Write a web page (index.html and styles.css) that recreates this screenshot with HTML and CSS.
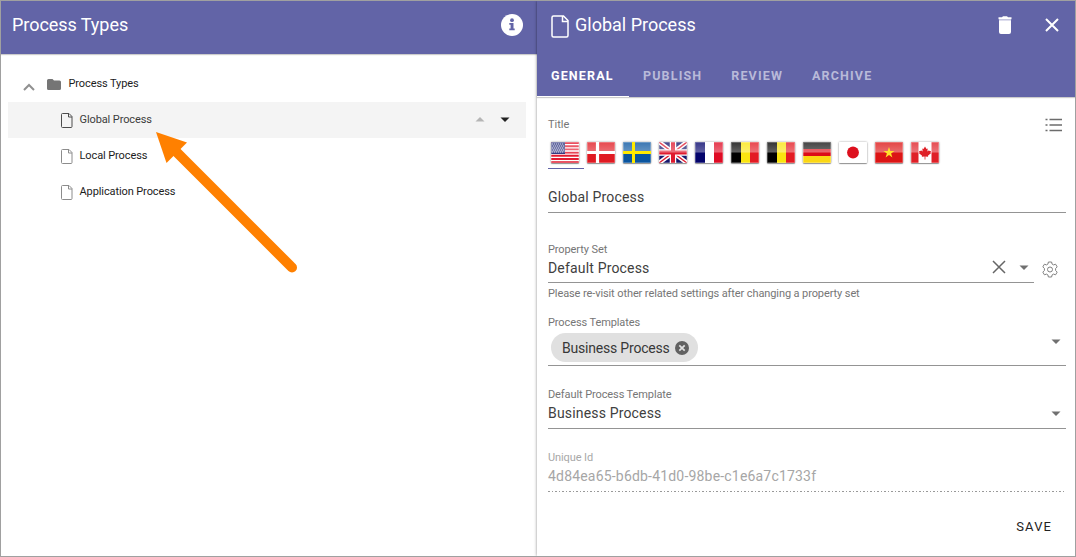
FILE: index.html
```html
<!DOCTYPE html>
<html lang="en">
<head>
<meta charset="utf-8">
<title>Process Types</title>
<link rel="stylesheet" href="styles.css">
</head>
<body>
<svg class="defs" width="0" height="0" aria-hidden="true">
  <defs>
    <linearGradient id="gloss" x1="0" y1="0" x2="0" y2="1"><stop offset="0" stop-color="#fff" stop-opacity=".2"/><stop offset="1" stop-color="#fff" stop-opacity=".38"/></linearGradient>
    <symbol id="doc" viewBox="0 0 12 15"><path d="M1.500.5h6.500l3 3v10a1 1 0 0 1-1 1h-8.500a1 1 0 0 1-1-1v-12a1 1 0 0 1 1-1zM7.500.5v3.500h3.500" fill="none" stroke="currentColor"/></symbol>
    <symbol id="down" viewBox="0 0 10 5"><path d="M.5.5h9L5 5z" fill="currentColor"/></symbol>
    <symbol id="shine" viewBox="0 0 28 21"><path d="M0 0h28v10.500H0z" fill="url(#gloss)"/><path d="M.5.5h27v20H.5z" fill="none" stroke="#fff" stroke-opacity=".25"/></symbol>
    <symbol id="belgium" viewBox="0 0 28 21"><path d="M0 0h10v21H0z" fill="#000"/><path d="M10 0h9v21h-9z" fill="#fae510"/><path d="M19 0h9v21h-9z" fill="#e31b23"/></symbol>
  </defs>
</svg>
<div class="frame">
  <section class="tree-panel">
    <header class="tree-header">
      <h1 class="heading list-heading">Process Types</h1>
      <svg class="info" width="22" height="22" viewBox="0 0 22 22"><circle cx="11" cy="11" r="11" fill="#fff"/><circle cx="11" cy="6.200" r="1.900" fill="#6264a7"/><path d="M8.300 9h4.200v5.500h1.200v1.800H8.300v-1.800h1.300v-3.700H8.300z" fill="#6264a7"/></svg>
    </header>
    <div class="tree">
      <div class="row root-row">
        <svg class="chevron" width="12" height="8" viewBox="0 0 12 8"><path d="M1 7l5-5 5 5" fill="none" stroke="#909090" stroke-width="2"/></svg>
        <svg class="folder" width="14" height="11" viewBox="0 0 14 11"><path d="M1.500 0h4L7 1.500h5.500A1.500 1.500 0 0 1 14 3v6.500a1.500 1.500 0 0 1-1.500 1.500h-11A1.500 1.500 0 0 1 0 9.500v-8A1.500 1.500 0 0 1 1.500 0z" fill="#757575"/></svg>
        <span class="node-text">Process Types</span>
      </div>
      <div class="row child selected">
        <svg class="doc-icon" width="12" height="15"><use href="#doc"/></svg>
        <span class="node-text">Global Process</span>
        <span class="movers">
          <svg class="up" width="10" height="5"><use href="#down"/></svg>
          <svg class="down" width="10" height="5"><use href="#down"/></svg>
        </span>
      </div>
      <div class="row child"><svg class="doc-icon" width="12" height="15"><use href="#doc"/></svg><span class="node-text">Local Process</span></div>
      <div class="row child"><svg class="doc-icon" width="12" height="15"><use href="#doc"/></svg><span class="node-text">Application Process</span></div>
    </div>
  </section>

  <section class="detail-panel">
    <header class="detail-header">
      <div class="title-bar">
        <svg class="title-doc" width="18" height="23" viewBox="0 0 18 23"><path d="M2.500 1h10l4.500 4.500v15a1.500 1.500 0 0 1-1.500 1.500h-13A1.500 1.500 0 0 1 1 20.500v-18A1.500 1.500 0 0 1 2.500 1zM11.500 1v5.500H17" fill="none" stroke="#fff" stroke-width="1.500"/></svg>
        <h2 class="heading detail-heading">Global Process</h2>
        <svg class="trash" width="14" height="18" viewBox="0 0 14 18"><path d="M1 5h12v11a2 2 0 0 1-2 2H3a2 2 0 0 1-2-2zM.5 1.200h3.500L5 .3h4l1 .9h3.500v2.100H.5z" fill="#fff"/><path d="M1 3.300h12V5H1z" fill="#dedeee"/></svg>
        <svg class="close" width="14" height="14" viewBox="0 0 14 14"><path d="M1 1l12 12M13 1L1 13" stroke="#fff" stroke-width="2"/></svg>
      </div>
      <nav class="tabs">
        <a class="tab active">GENERAL</a><a class="tab">PUBLISH</a><a class="tab">REVIEW</a><a class="tab">ARCHIVE</a>
      </nav>
    </header>
    <div class="form">
      <div class="field title-field">
        <div class="label-line"><span>Title</span>
          <svg class="list-icon" width="18" height="14" viewBox="0 0 18 14"><path d="M4.500 1.500H17M4.500 7H17M4.500 12.500H17M.5 1.500h2M.5 7h2M.5 12.500h2" stroke="#6c6c6c" stroke-width="1.700"/></svg>
        </div>
        <div class="flags">
          <span class="flag current"><svg viewBox="0 0 28 21"><path d="M0 0h28v21H0z" fill="#fff"/><path d="M0 1h28M0 4.200h28M0 7.400h28M0 10.600h28M0 13.800h28M0 17h28M0 20.200h28" stroke="#e21b30" stroke-width="1.900"/><path d="M0 0h14v12H0z" fill="#343b82"/><path d="M1 2h12M2 4h11M1 6h12M2 8h11M1 10h12" stroke="#d5d8ee" stroke-width=".9" stroke-dasharray="1 1"/><use href="#shine"/></svg></span>
          <span class="flag"><svg viewBox="0 0 28 21"><path d="M0 0h28v21H0z" fill="#e01a22"/><path d="M10.500 0v21M0 10.500h28" stroke="#fff" stroke-width="3.200"/><use href="#shine"/></svg></span>
          <span class="flag"><svg viewBox="0 0 28 21"><path d="M0 0h28v21H0z" fill="#0a559f"/><use href="#shine"/><path d="M10.500 0v21M0 10.500h28" stroke="#ffea00" stroke-width="3"/></svg></span>
          <span class="flag"><svg viewBox="0 0 28 21"><path d="M0 0h28v21H0z" fill="#17176b"/><path d="M0 0l28 21M28 0L0 21" stroke="#fff" stroke-width="4.500"/><path d="M0 0l28 21M28 0L0 21" stroke="#df1b2f" stroke-width="1.400"/><path d="M14 0v21M0 10.500h28" stroke="#fff" stroke-width="6.500"/><path d="M14 0v21M0 10.500h28" stroke="#df1b2f" stroke-width="4"/><use href="#shine"/></svg></span>
          <span class="flag"><svg viewBox="0 0 28 21"><path d="M0 0h10v21H0z" fill="#04046b"/><path d="M10 0h9v21h-9z" fill="#fff"/><path d="M19 0h9v21h-9z" fill="#df0b24"/><use href="#shine"/></svg></span>
          <span class="flag"><svg viewBox="0 0 28 21"><use href="#belgium"/><use href="#shine"/></svg></span>
          <span class="flag"><svg viewBox="0 0 28 21"><use href="#belgium"/><use href="#shine"/></svg></span>
          <span class="flag"><svg viewBox="0 0 28 21"><path d="M0 0h28v7H0z" fill="#151515"/><path d="M0 7h28v7H0z" fill="#dc0c17"/><path d="M0 14h28v7H0z" fill="#fbd714"/><use href="#shine"/></svg></span>
          <span class="flag"><svg viewBox="0 0 28 21"><path d="M0 0h28v21H0z" fill="#fff"/><use href="#shine"/><circle cx="14" cy="10.500" r="5.900" fill="#dd0f1d"/></svg></span>
          <span class="flag"><svg viewBox="0 0 28 21"><path d="M0 0h28v21H0z" fill="#dc1515"/><use href="#shine"/><path d="M14 5l1.300 4h4.200l-3.400 2.400 1.300 4L14 13l-3.400 2.400 1.300-4L8.500 9h4.200z" fill="#ffe22c"/></svg></span>
          <span class="flag"><svg viewBox="0 0 28 21"><path d="M0 0h28v21H0z" fill="#fff"/><path d="M0 0h7.500v21H0zM20.500 0H28v21h-7.500z" fill="#df2027"/><use href="#shine"/><path d="M14 4.500l1.500 2.500 1.200-.5-.3 3 1.600-1.300.5.9 1.500-.2-.6 1.600.8.600-3.300 2.600.3 1.100-2.800-.3v3h-.8v-3l-2.800.3.300-1.100-3.300-2.600.8-.6-.6-1.600 1.500.2.500-.9 1.600 1.300-.3-3 1.200.5z" fill="#df2027"/></svg></span>
        </div>
        <div class="value title-value"><span>Global Process</span></div>
      </div>

      <div class="set-line">
        <div class="field set-field">
          <div class="label"><span>Property Set</span></div>
          <div class="value"><span>Default Process</span>
            <svg class="clear" width="14" height="14" viewBox="0 0 14 14"><path d="M1 1l12 12M13 1L1 13" stroke="#666" stroke-width="1.500"/></svg>
            <svg class="caret set-caret" width="10" height="5"><use href="#down"/></svg>
          </div>
        </div>
        <svg class="gear" width="16" height="17" viewBox="0 0 16 17"><path d="M6.400 1h3.200l.5 2.100 1.400.8 2.100-.7 1.600 2.700-1.600 1.600v2l1.600 1.600-1.600 2.700-2.100-.7-1.400.8-.5 2.100H6.400l-.5-2.100-1.400-.8-2.100.7-1.600-2.700 1.600-1.600v-2L.8 5.900l1.600-2.700 2.100.7 1.400-.8z" fill="none" stroke="#808080" stroke-linejoin="round"/><circle cx="8" cy="8.500" r="2.500" fill="none" stroke="#808080"/></svg>
      </div>
      <div class="label hint"><span>Please re-visit other related settings after changing a property set</span></div>

      <div class="field chips-field">
        <div class="label"><span>Process Templates</span></div>
        <div class="chip-line">
          <span class="chip"><span>Business Process</span>
            <svg width="14" height="14" viewBox="0 0 14 14"><circle cx="7" cy="7" r="7" fill="#616161"/><path d="M4.300 4.300l5.400 5.400M9.700 4.300L4.300 9.700" stroke="#e0e0e0" stroke-width="1.700"/></svg>
          </span>
          <svg class="caret" width="10" height="5"><use href="#down"/></svg>
        </div>
      </div>

      <div class="field default-field">
        <div class="label"><span>Default Process Template</span></div>
        <div class="value"><span>Business Process</span><svg class="caret" width="10" height="5"><use href="#down"/></svg></div>
      </div>

      <div class="field id-field">
        <div class="label"><span>Unique Id</span></div>
        <div class="value"><span>4d84ea65-b6db-41d0-98be-c1e6a7c1733f</span></div>
        <div class="dashes"></div>
      </div>
      <div class="actions"><span class="save">SAVE</span></div>
    </div>
  </section>
</div>
<svg class="pointer" width="150" height="150" viewBox="0 0 150 150"><path d="M20 19.500L137 136.500" stroke="#ff8000" stroke-width="10" stroke-linecap="round"/><path d="M1 1l31 10.500L11.500 32z" fill="#ff8000"/></svg>
</body>
</html>
```
FILE: styles.css
```css
* { box-sizing: border-box; }
body { margin: 0; font-family: Roboto, "Liberation Sans", sans-serif; background: #fff; }
svg { display: block; flex: none; }
.defs { position: absolute; }
.frame { display: flex; width: 1076px; height: 557px; border: 1px solid #a0a0a0; overflow: hidden; }

.tree-panel { width: 536px; }
.tree-header { display: flex; align-items: center; justify-content: space-between; height: 53px; padding: 0 14px 6px 11px; background: #6264a7; box-shadow: 0 1px 1px rgba(0,0,0,.2); }
.heading { margin: 0; color: #fff; font-size: 18px; font-weight: 400; line-height: 24px; white-space: nowrap; }
.list-heading { letter-spacing: -.05px; }
.tree { padding: 12px 11px 0 7px; }
.row { display: flex; align-items: center; height: 36px; }
.root-row { padding-left: 15px; }
.chevron { margin-top: 6px; }
.folder { margin: 0 7.500px 0 12px; }
.node-text { font-size: 11px; line-height: 14px; letter-spacing: -.1px; color: #1c1c1c; white-space: nowrap; margin-top: -1px; }
.child { padding-left: 52.500px; }
.doc-icon { margin-right: 7px; margin-top: 0; color: #8c8c8c; }
.selected { background: #f4f4f4; }
.selected .doc-icon { color: #4c4c4c; }
.selected .node-text { color: #3c3c3c; }
.movers { display: flex; gap: 15px; margin-left: auto; padding-right: 16px; margin-top: -2px; }
.up { transform: rotate(180deg); color: #b5b5b5; }
.down { color: #222; }

.detail-panel { width: 538px; position: relative; box-shadow: 0 0 3px rgba(0,0,0,.45); background: #fff; }
.detail-header { height: 96px; background: #6264a7; box-shadow: 0 1px 1px rgba(0,0,0,.2); }
.title-bar { display: flex; align-items: center; height: 53px; padding: 0 16px 6px 14px; }
.title-doc { margin-top: 3px; }
.detail-heading { margin-left: 6px; }
.trash { margin-left: auto; margin-top: 1px; }
.close { margin-left: 33px; margin-top: 1px; }
.tabs { display: flex; height: 43px; }
.tab { height: 43px; padding: 13px 0 0 14px; margin-right: 15px; font-size: 12.500px; font-weight: 700; line-height: 17px; letter-spacing: 1.150px; color: #b9bad9; white-space: nowrap; }
.tab.active { width: 92px; margin-right: 0; color: #fff; border-bottom: 1px solid #fff; }

.form { padding: 0 9px 0 11px; }
.label, .label-line { font-size: 11px; line-height: 14px; height: 14px; letter-spacing: -.1px; color: #767676; white-space: nowrap; }
.label span, .label-line span { padding-top: 1px; display: block; }
.label-line { display: flex; justify-content: space-between; letter-spacing: 0; }
.value { display: flex; align-items: center; height: 20px; margin-top: 2px; font-size: 14px; line-height: 20px; letter-spacing: .17px; color: #404040; white-space: nowrap; }
.field { border-bottom: 1px solid #949494; }
.title-field { height: 116px; padding-top: 20px; }
.list-icon { margin: 1px 3px 0 0; }
.flags { display: flex; height: 27px; margin-top: 11px; }
.flag { width: 36px; height: 27px; padding-left: 3px; }
.flag svg { width: 28px; height: 21px; border-radius: 1px; box-shadow: 0 1px 1px rgba(0,0,0,.35), 0 0 2px rgba(0,0,0,.45); }
.current { border-bottom: 1px solid #6264a7; }
.title-value { margin-top: 18px; }
.set-line { display: flex; height: 70px; }
.set-field { width: 486px; padding-top: 29px; }
.clear { margin: -3px 13px 0 auto; }
.caret { color: #707070; margin-left: auto; margin-right: 5.500px; }
.set-caret { margin-left: 0; margin-top: -2px; }
.gear { margin: 48px 0 0 8px; }
.hint { margin-top: 3px; }
.chips-field { height: 66px; padding-top: 15px; }
.chip-line { display: flex; align-items: center; height: 29px; margin: 4px 0 0 3px; }
.chip { display: flex; align-items: center; width: 147px; height: 29px; padding: 0 9px 0 11px; border-radius: 15px; justify-content: space-between; background: #e0e0e0; color: #383838; font-size: 14px; letter-spacing: -.2px; }
.chip-line .caret { margin-top: -13px; }
.default-field { height: 63px; padding-top: 21px; }
.id-field { height: 63px; padding-top: 21px; border: 0; }
.id-field .label { color: #a8a8a8; }
.id-field .value { color: #a6a6a6; letter-spacing: .19px; }
.dashes { height: 1px; margin-top: 5px; background: repeating-linear-gradient(90deg, #999 0 2px, transparent 2px 4px, #999 4px 5px, transparent 5px 7px); }
.actions { display: flex; justify-content: flex-end; padding: 25px 14px 0 0; }
.save { font-size: 13px; line-height: 20px; letter-spacing: 1.100px; color: #222; font-weight: 400; }
.pointer { position: absolute; left: 155px; top: 131px; }
```
